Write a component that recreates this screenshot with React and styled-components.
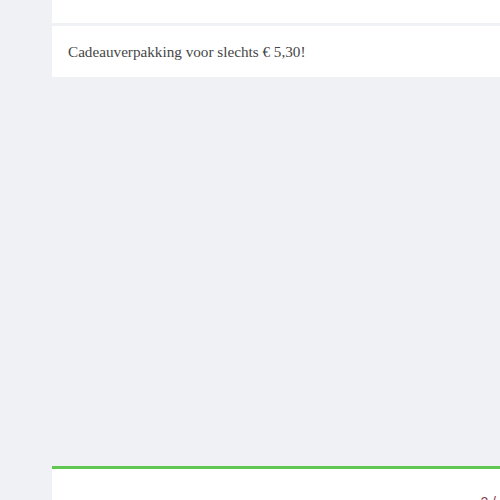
import styled, { createGlobalStyle } from 'styled-components'

const GlobalStyle = createGlobalStyle`
  html, body {
    margin: 0;
    padding: 0;
    height: 500px;
    overflow: hidden;
    background: #f0f1f5;
  }
`

const Page = styled.div`
  display: flex;
  height: 500px;
`

const Sidebar = styled.div`
  width: 52px;
  flex-shrink: 0;
`

const Main = styled.div`
  flex: 1;
  display: flex;
  flex-direction: column;
`

const Panel = styled.div`
  background: #fff;
  height: ${p => p.height}px;
  margin-bottom: ${p => p.gap || 0}px;
  display: flex;
  align-items: center;
  padding: 0 16px;
`

const PromoText = styled.p`
  margin: 0;
  font-family: "Liberation Serif", Georgia, serif;
  font-size: 15.2px;
  color: #464646;
`

const Spacer = styled.div`
  flex: 1;
`

const Footer = styled.div`
  background: #fff;
  border-top: 3px solid #5ec850;
  height: 34px;
  display: flex;
  justify-content: flex-end;
  padding: 26px 4px 0 0;
  box-sizing: border-box;
`

const Pager = styled.span`
  font-family: "Liberation Sans", Arial, sans-serif;
  font-size: 14px;
  color: #8a3a4a;
  line-height: 1;
`

export default function App() {
  return (
    <>
      <GlobalStyle />
      <Page>
        <Sidebar />
        <Main>
          <Panel height={23} gap={3} />
          <Panel height={51}>
            <PromoText>Cadeauverpakking voor slechts € 5,30!</PromoText>
          </Panel>
          <Spacer />
          <Footer>
            <Pager>2 /</Pager>
          </Footer>
        </Main>
      </Page>
    </>
  )
}
